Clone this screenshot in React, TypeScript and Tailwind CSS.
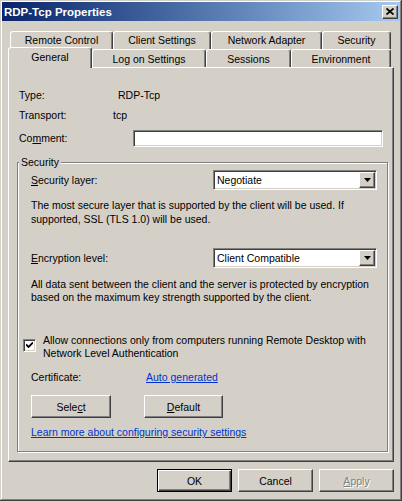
import React from "react";

const raised =
  "border border-t-white border-l-white border-r-[#404040] border-b-[#404040] shadow-[inset_-1px_-1px_0_#808080]";
const sunken =
  "border border-t-[#808080] border-l-[#808080] border-r-white border-b-white shadow-[inset_1px_1px_0_#404040,inset_-1px_-1px_0_#d4d0c8]";
const tabBase =
  "flex justify-center border-t border-l border-r border-t-white border-l-white border-r-[#404040] rounded-t-[3px] shadow-[inset_-1px_0_0_#808080] bg-[#d4d0c8] whitespace-nowrap";

function Tab({ label, w, row }: { label: string; w: string; row: 1 | 2 }) {
  return (
    <div className={`${tabBase} ${w} ${row === 1 ? "h-[18px] pt-[1px]" : "h-[18px] pt-[2px]"}`}>
      <span className="leading-[14px]">{label}</span>
    </div>
  );
}

function Dropdown({ value }: { value: string }) {
  return (
    <div className={`w-[164px] h-[20px] bg-white ${sunken} flex items-center`}>
      <span className="flex-1 pl-[3px] leading-[14px] whitespace-nowrap">{value}</span>
      <div className={`w-[16px] h-[16px] mr-[1px] bg-[#d4d0c8] ${raised} flex items-center justify-center`}>
        <svg width="7" height="4" viewBox="0 0 7 4">
          <path d="M0 0H7L3.5 4Z" fill="#000" />
        </svg>
      </div>
    </div>
  );
}

export default function App() {
  return (
    <div className="w-[402px] h-[501px] bg-[#d4d0c8] p-[2px] flex flex-col text-black text-[10.5px] leading-[14px] font-['Liberation_Sans',Arial,sans-serif] shadow-[inset_-1px_-1px_0_#404040,inset_1px_1px_0_#d4d0c8,inset_-2px_-2px_0_#808080,inset_2px_2px_0_#ffffff]">
      {/* Title bar */}
      <div className="h-[19px] flex items-center justify-between pl-[2px] pr-[2px] bg-linear-to-r from-[#0a246a] to-[#a6caf0]">
        <span className="text-white font-bold text-[11.5px] leading-[14px] whitespace-nowrap">
          RDP-Tcp Properties
        </span>
        <div className={`w-[16px] h-[14px] bg-[#d4d0c8] ${raised} flex items-center justify-center`}>
          <svg width="8" height="7" viewBox="0 0 8 7">
            <path d="M0.5 0.5L7.5 6.5M7.5 0.5L0.5 6.5" stroke="#000" strokeWidth="1.7" />
          </svg>
        </div>
      </div>

      <div className="px-[6px] flex flex-col">
        {/* Tabs row 1 */}
        <div className="mt-[10px] ml-[2px] flex h-[18px]">
          <Tab label="Remote Control" w="w-[103px]" row={1} />
          <Tab label="Client Settings" w="w-[98px]" row={1} />
          <Tab label="Network Adapter" w="w-[111px]" row={1} />
          <Tab label="Security" w="w-[69px]" row={1} />
        </div>
        {/* Tabs row 2 */}
        <div className="-mt-[2px] flex items-end h-[20px]">
          <div className={`${tabBase} w-[84px] h-[21px] -mb-px pt-[2px] relative z-10`}>
            <span className="leading-[14px]">General</span>
          </div>
          <Tab label="Log on Settings" w="w-[114px]" row={2} />
          <Tab label="Sessions" w="w-[85px]" row={2} />
          <Tab label="Environment" w="w-[100px]" row={2} />
        </div>

        {/* Panel */}
        <div className={`h-[395px] ${raised} flex flex-col`}>
          <div className="mt-[20px] ml-[10px] flex">
            <span className="w-[99px]">Type:</span>
            <span>RDP-Tcp</span>
          </div>
          <div className="mt-[6px] ml-[10px] flex">
            <span className="w-[94px]">Transport:</span>
            <span>tcp</span>
          </div>
          <div className="mt-[8px] ml-[10px] flex items-center h-[17px]">
            <span className="w-[114px] pb-[2px]">
              Co<u>m</u>ment:
            </span>
            <div className={`w-[250px] h-[17px] bg-white ${sunken}`} />
          </div>

          {/* Security group */}
          <div className="mt-[15px] ml-[8px] w-[371px] h-[290px] border border-[#808080] shadow-[inset_1px_1px_0_#ffffff,1px_1px_0_#ffffff] pl-[13px] pr-[10px] flex flex-col">
            <div className="-mt-[7px] -ml-[12px] w-fit px-[2px] bg-[#d4d0c8] leading-[13px]">Security</div>

            <div className="mt-[1px] h-[20px] flex items-center justify-between">
              <span>
                <u>S</u>ecurity layer:
              </span>
              <Dropdown value="Negotiate" />
            </div>
            <p className="mt-[8px] leading-[14px] whitespace-nowrap">
              The most secure layer that is supported by the client will be used. If
              <br />
              supported, SSL (TLS 1.0) will be used.
            </p>

            <div className="mt-[22px] h-[20px] flex items-center justify-between">
              <span>
                <u>E</u>ncryption level:
              </span>
              <Dropdown value="Client Compatible" />
            </div>
            <p className="mt-[10px] leading-[13px] whitespace-nowrap">
              All data sent between the client and the server is protected by encryption
              <br />
              based on the maximum key strength supported by the client.
            </p>

            <div className="mt-[30px] -ml-[8px] flex">
              <div className={`mt-[5px] w-[13px] h-[13px] bg-white ${sunken} flex items-center justify-center shrink-0`}>
                <svg width="7" height="7" viewBox="0 0 7 7">
                  <path d="M0 2.5L2.5 5L7 0.5" stroke="#000" strokeWidth="1.8" fill="none" />
                </svg>
              </div>
              <p className="ml-[7px] leading-[13px] whitespace-nowrap">
                Allow connections only from computers running Remote Desktop with
                <br />
                Network Level Authentication
              </p>
            </div>

            <div className="mt-[10px] flex">
              <span className="w-[115px]">Certificate:</span>
              <span className="text-[#0033cc] underline">Auto generated</span>
            </div>

            <div className="mt-[11px] flex">
              <div className={`w-[80px] h-[23px] ${raised} flex items-center justify-center`}>
                <span>
                  Sele<u>c</u>t
                </span>
              </div>
              <div className={`ml-[33px] w-[79px] h-[23px] ${raised} flex items-center justify-center`}>
                <span>
                  <u>D</u>efault
                </span>
              </div>
            </div>

            <div className="mt-[7px]">
              <span className="text-[#0033cc] underline whitespace-nowrap">
                Learn more about configuring security settings
              </span>
            </div>
          </div>
        </div>

        {/* Bottom buttons */}
        <div className="mt-[7px] flex justify-end gap-[6px]">
          <div className="w-[75px] h-[23px] border border-black shadow-[inset_1px_1px_0_#ffffff,inset_-1px_-1px_0_#404040,inset_-2px_-2px_0_#808080] flex items-center justify-center">
            OK
          </div>
          <div className={`w-[75px] h-[23px] ${raised} flex items-center justify-center`}>Cancel</div>
          <div className={`w-[75px] h-[23px] ${raised} flex items-center justify-center text-[#808080] [text-shadow:1px_1px_0_#ffffff]`}>
            <span>
              <u>A</u>pply
            </span>
          </div>
        </div>
      </div>
    </div>
  );
}
